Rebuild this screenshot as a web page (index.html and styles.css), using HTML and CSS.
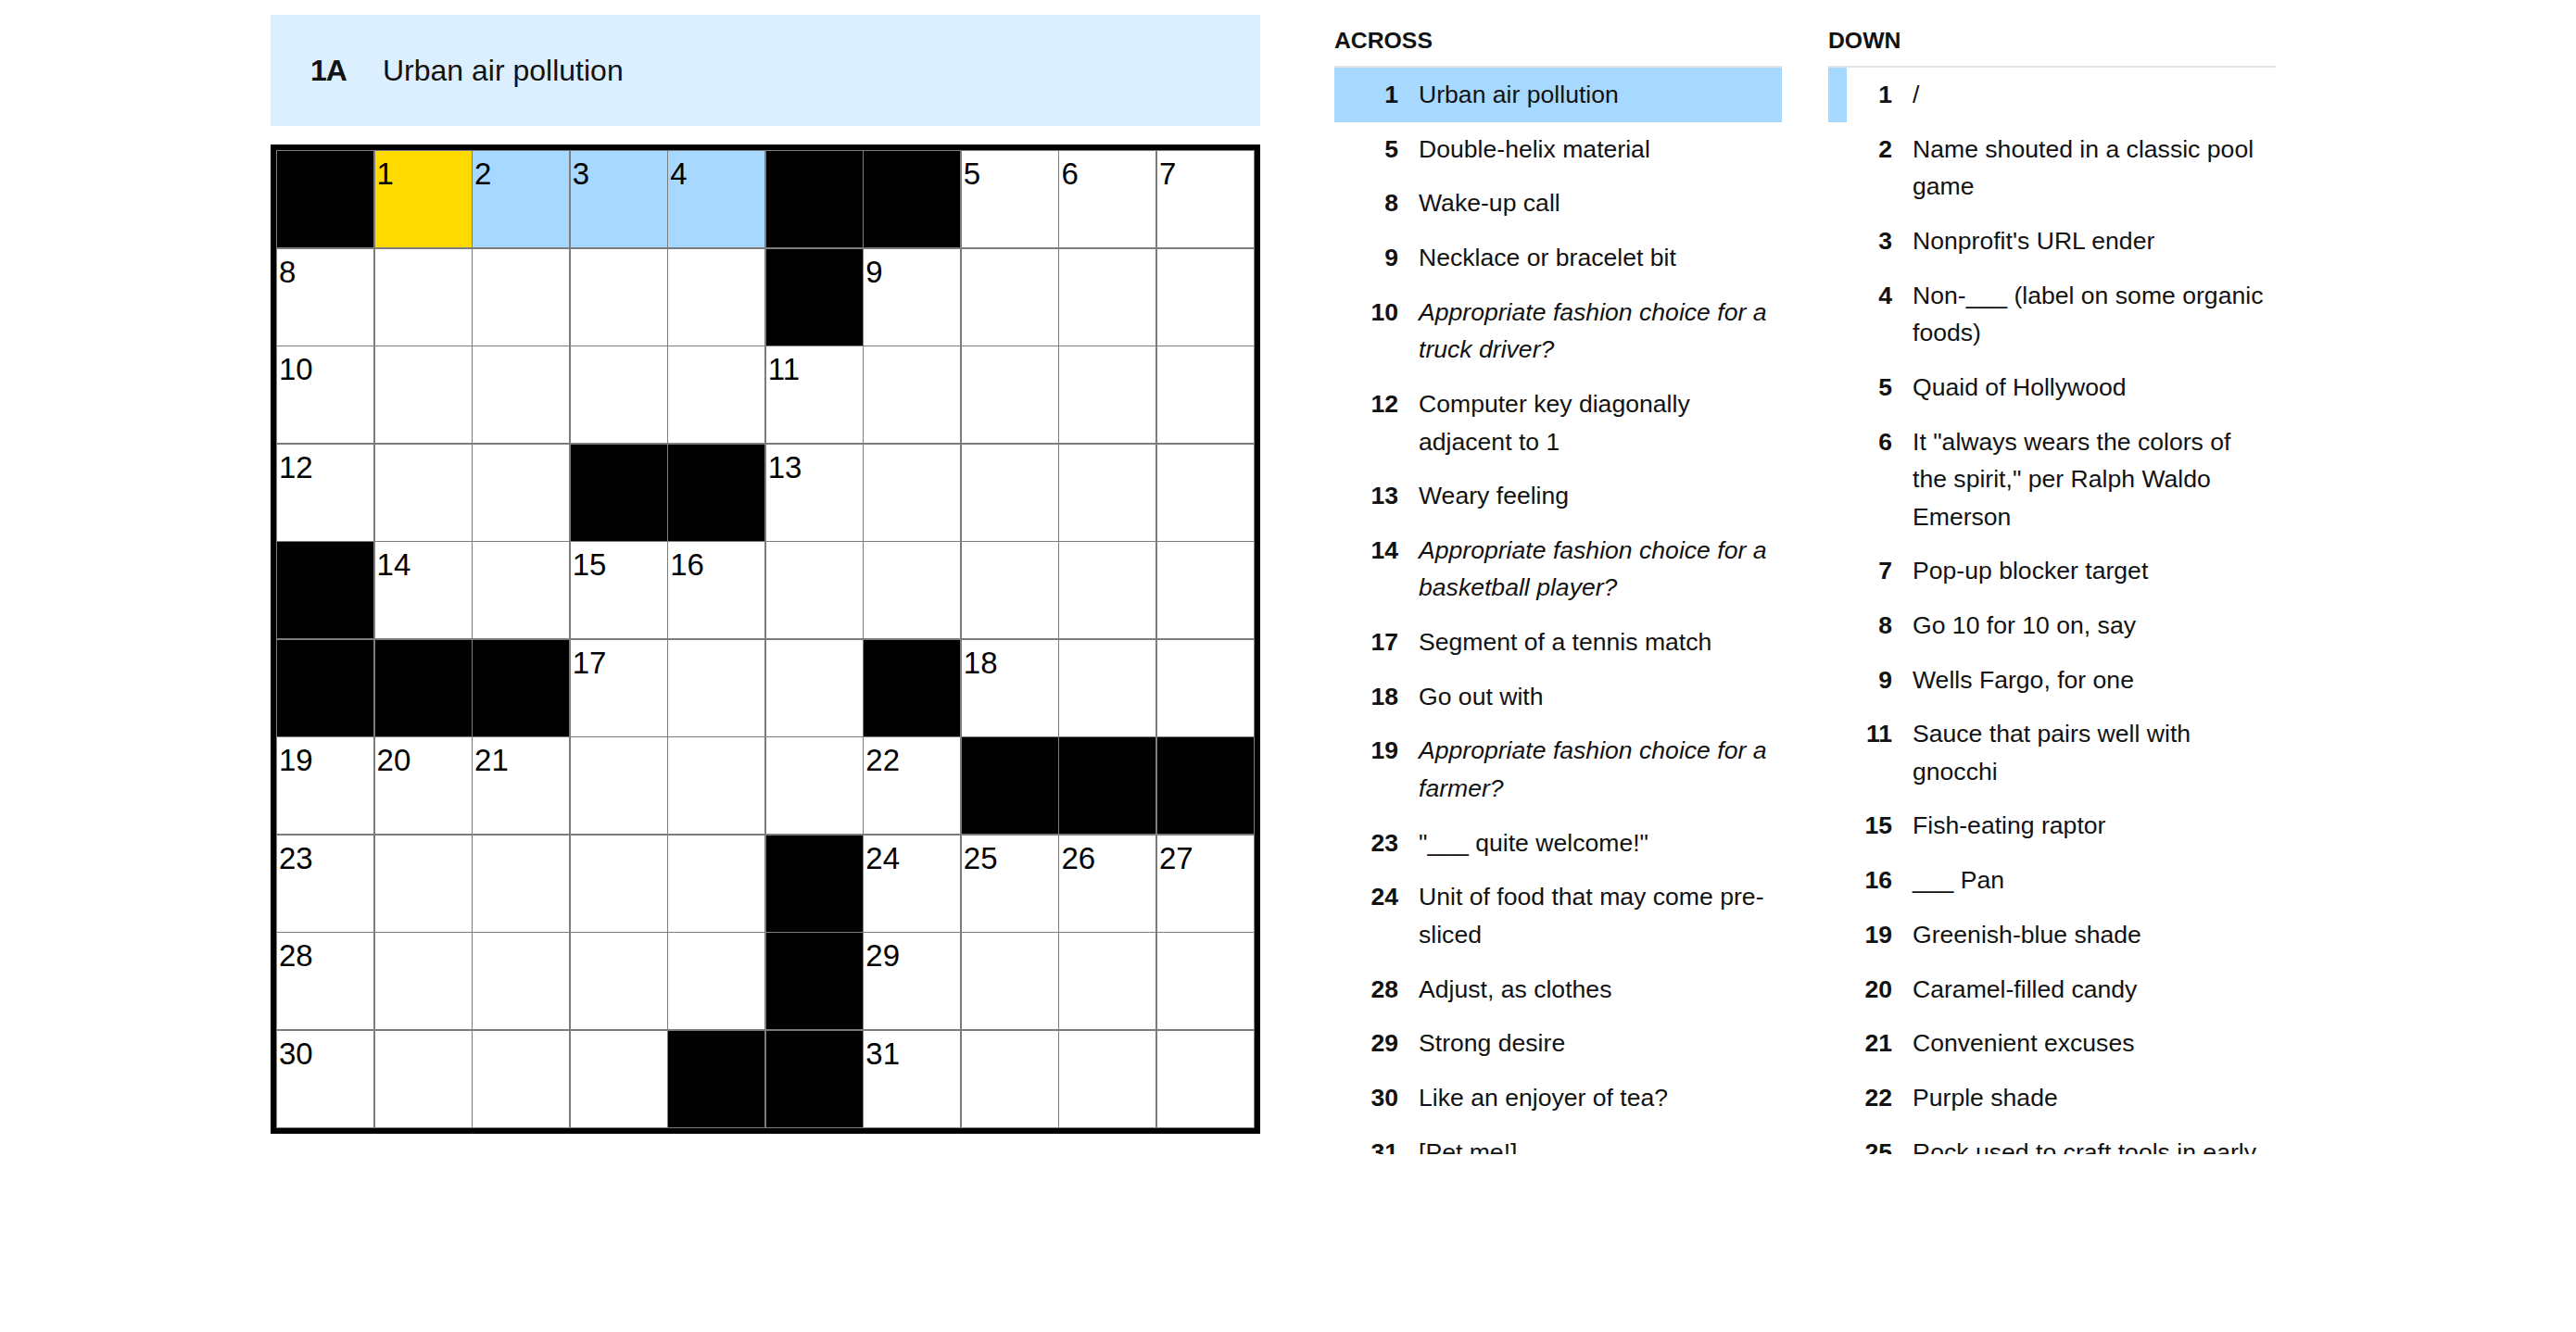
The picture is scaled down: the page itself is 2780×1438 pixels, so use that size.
FILE: index.html
```html
<!DOCTYPE html>
<html lang="en">
<head>
<meta charset="utf-8">
<title>Crossword</title>
<link rel="stylesheet" href="styles.css">
</head>
<body>
<main class="app">
  <section class="board">
    <div class="clue-bar">
      <span class="clue-bar-label">1A</span>
      <span class="clue-bar-text">Urban air pollution</span>
    </div>
    <div class="grid-frame">
      <div class="grid">
        <!-- row 1 -->
        <div class="cell block"></div>
        <div class="cell sel"><span class="num">1</span></div>
        <div class="cell word"><span class="num">2</span></div>
        <div class="cell word"><span class="num">3</span></div>
        <div class="cell word"><span class="num">4</span></div>
        <div class="cell block"></div>
        <div class="cell block"></div>
        <div class="cell"><span class="num">5</span></div>
        <div class="cell"><span class="num">6</span></div>
        <div class="cell"><span class="num">7</span></div>
        <!-- row 2 -->
        <div class="cell"><span class="num">8</span></div>
        <div class="cell"></div>
        <div class="cell"></div>
        <div class="cell"></div>
        <div class="cell"></div>
        <div class="cell block"></div>
        <div class="cell"><span class="num">9</span></div>
        <div class="cell"></div>
        <div class="cell"></div>
        <div class="cell"></div>
        <!-- row 3 -->
        <div class="cell"><span class="num">10</span></div>
        <div class="cell"></div>
        <div class="cell"></div>
        <div class="cell"></div>
        <div class="cell"></div>
        <div class="cell"><span class="num">11</span></div>
        <div class="cell"></div>
        <div class="cell"></div>
        <div class="cell"></div>
        <div class="cell"></div>
        <!-- row 4 -->
        <div class="cell"><span class="num">12</span></div>
        <div class="cell"></div>
        <div class="cell"></div>
        <div class="cell block"></div>
        <div class="cell block"></div>
        <div class="cell"><span class="num">13</span></div>
        <div class="cell"></div>
        <div class="cell"></div>
        <div class="cell"></div>
        <div class="cell"></div>
        <!-- row 5 -->
        <div class="cell block"></div>
        <div class="cell"><span class="num">14</span></div>
        <div class="cell"></div>
        <div class="cell"><span class="num">15</span></div>
        <div class="cell"><span class="num">16</span></div>
        <div class="cell"></div>
        <div class="cell"></div>
        <div class="cell"></div>
        <div class="cell"></div>
        <div class="cell"></div>
        <!-- row 6 -->
        <div class="cell block"></div>
        <div class="cell block"></div>
        <div class="cell block"></div>
        <div class="cell"><span class="num">17</span></div>
        <div class="cell"></div>
        <div class="cell"></div>
        <div class="cell block"></div>
        <div class="cell"><span class="num">18</span></div>
        <div class="cell"></div>
        <div class="cell"></div>
        <!-- row 7 -->
        <div class="cell"><span class="num">19</span></div>
        <div class="cell"><span class="num">20</span></div>
        <div class="cell"><span class="num">21</span></div>
        <div class="cell"></div>
        <div class="cell"></div>
        <div class="cell"></div>
        <div class="cell"><span class="num">22</span></div>
        <div class="cell block"></div>
        <div class="cell block"></div>
        <div class="cell block"></div>
        <!-- row 8 -->
        <div class="cell"><span class="num">23</span></div>
        <div class="cell"></div>
        <div class="cell"></div>
        <div class="cell"></div>
        <div class="cell"></div>
        <div class="cell block"></div>
        <div class="cell"><span class="num">24</span></div>
        <div class="cell"><span class="num">25</span></div>
        <div class="cell"><span class="num">26</span></div>
        <div class="cell"><span class="num">27</span></div>
        <!-- row 9 -->
        <div class="cell"><span class="num">28</span></div>
        <div class="cell"></div>
        <div class="cell"></div>
        <div class="cell"></div>
        <div class="cell"></div>
        <div class="cell block"></div>
        <div class="cell"><span class="num">29</span></div>
        <div class="cell"></div>
        <div class="cell"></div>
        <div class="cell"></div>
        <!-- row 10 -->
        <div class="cell"><span class="num">30</span></div>
        <div class="cell"></div>
        <div class="cell"></div>
        <div class="cell"></div>
        <div class="cell block"></div>
        <div class="cell block"></div>
        <div class="cell"><span class="num">31</span></div>
        <div class="cell"></div>
        <div class="cell"></div>
        <div class="cell"></div>
      </div>
    </div>
  </section>

  <section class="clue-lists">
    <div class="clue-col">
      <h3 class="clue-head">Across</h3>
      <ol class="clue-list">
        <li class="clue active"><span class="clue-num">1</span><span class="clue-text">Urban air pollution</span></li>
        <li class="clue"><span class="clue-num">5</span><span class="clue-text">Double-helix material</span></li>
        <li class="clue"><span class="clue-num">8</span><span class="clue-text">Wake-up call</span></li>
        <li class="clue"><span class="clue-num">9</span><span class="clue-text">Necklace or bracelet bit</span></li>
        <li class="clue"><span class="clue-num">10</span><span class="clue-text"><em>Appropriate fashion choice for a truck driver?</em></span></li>
        <li class="clue"><span class="clue-num">12</span><span class="clue-text">Computer key diagonally adjacent to 1</span></li>
        <li class="clue"><span class="clue-num">13</span><span class="clue-text">Weary feeling</span></li>
        <li class="clue"><span class="clue-num">14</span><span class="clue-text"><em>Appropriate fashion choice for a basketball player?</em></span></li>
        <li class="clue"><span class="clue-num">17</span><span class="clue-text">Segment of a tennis match</span></li>
        <li class="clue"><span class="clue-num">18</span><span class="clue-text">Go out with</span></li>
        <li class="clue"><span class="clue-num">19</span><span class="clue-text"><em>Appropriate fashion choice for a farmer?</em></span></li>
        <li class="clue"><span class="clue-num">23</span><span class="clue-text">"___ quite welcome!"</span></li>
        <li class="clue"><span class="clue-num">24</span><span class="clue-text">Unit of food that may come pre-sliced</span></li>
        <li class="clue"><span class="clue-num">28</span><span class="clue-text">Adjust, as clothes</span></li>
        <li class="clue"><span class="clue-num">29</span><span class="clue-text">Strong desire</span></li>
        <li class="clue"><span class="clue-num">30</span><span class="clue-text">Like an enjoyer of tea?</span></li>
        <li class="clue"><span class="clue-num">31</span><span class="clue-text">[Pet me!]</span></li>
      </ol>
    </div>
    <div class="clue-col">
      <h3 class="clue-head">Down</h3>
      <ol class="clue-list">
        <li class="clue cross"><span class="clue-num">1</span><span class="clue-text">/</span></li>
        <li class="clue"><span class="clue-num">2</span><span class="clue-text">Name shouted in a classic pool game</span></li>
        <li class="clue"><span class="clue-num">3</span><span class="clue-text">Nonprofit's URL ender</span></li>
        <li class="clue"><span class="clue-num">4</span><span class="clue-text">Non-___ (label on some organic foods)</span></li>
        <li class="clue"><span class="clue-num">5</span><span class="clue-text">Quaid of Hollywood</span></li>
        <li class="clue"><span class="clue-num">6</span><span class="clue-text">It "always wears the colors of the spirit," per Ralph Waldo Emerson</span></li>
        <li class="clue"><span class="clue-num">7</span><span class="clue-text">Pop-up blocker target</span></li>
        <li class="clue"><span class="clue-num">8</span><span class="clue-text">Go 10 for 10 on, say</span></li>
        <li class="clue"><span class="clue-num">9</span><span class="clue-text">Wells Fargo, for one</span></li>
        <li class="clue"><span class="clue-num">11</span><span class="clue-text">Sauce that pairs well with gnocchi</span></li>
        <li class="clue"><span class="clue-num">15</span><span class="clue-text">Fish-eating raptor</span></li>
        <li class="clue"><span class="clue-num">16</span><span class="clue-text">___ Pan</span></li>
        <li class="clue"><span class="clue-num">19</span><span class="clue-text">Greenish-blue shade</span></li>
        <li class="clue"><span class="clue-num">20</span><span class="clue-text">Caramel-filled candy</span></li>
        <li class="clue"><span class="clue-num">21</span><span class="clue-text">Convenient excuses</span></li>
        <li class="clue"><span class="clue-num">22</span><span class="clue-text">Purple shade</span></li>
        <li class="clue"><span class="clue-num">25</span><span class="clue-text">Rock used to craft tools in early times</span></li>
      </ol>
    </div>
  </section>
</main>
</body>
</html>
```

FILE: styles.css
```css
* {
  box-sizing: border-box;
}

html,
body {
  margin: 0;
  background: #fff;
}

body {
  font-family: "Liberation Sans", Arial, sans-serif;
  color: #121212;
}

.app {
  display: flex;
  align-items: flex-start;
  gap: 80px;
  padding: 16px 0 0 292px;
}

/* ---------- board: current clue + grid ---------- */

.board {
  width: 1068px;
  flex: none;
  display: flex;
  flex-direction: column;
  gap: 20px;
}

.clue-bar {
  height: 120px;
  background: #dcefff;
  display: flex;
  align-items: center;
  padding-left: 43px;
  font-size: 32px;
}

.clue-bar-label {
  width: 78px;
  flex: none;
  font-weight: 700;
  letter-spacing: -1px;
}

.grid-frame {
  width: 1068px;
  height: 1068px;
  border: 6px solid #000;
  background: #7c7c7c;
}

.grid {
  width: 100%;
  height: 100%;
  display: grid;
  grid-template-columns: repeat(10, 1fr);
  grid-template-rows: repeat(10, 1fr);
  gap: 1.5px;
  padding: 1px;
}

.cell {
  position: relative;
  background: #fff;
}

.cell.block {
  background: #000;
}

.cell.sel {
  background: #ffda00;
}

.cell.word {
  background: #a7d8ff;
}

.num {
  position: absolute;
  top: 8px;
  left: 2px;
  font-size: 33px;
  line-height: 1;
  color: #000;
}

/* ---------- clue lists ---------- */

.clue-lists {
  display: flex;
  gap: 50px;
}

.clue-col {
  width: 483px;
  flex: none;
}

.clue-head {
  margin: 0;
  height: 57px;
  line-height: 55px;
  font-size: 24.75px;
  font-weight: 700;
  text-transform: uppercase;
  border-bottom: 2px solid #e4e4e4;
}

.clue-list {
  list-style: none;
  margin: 0;
  padding: 0;
  height: 1173px;
  overflow: hidden;
}

.clue {
  display: flex;
  align-items: flex-start;
  border-left: 20px solid transparent;
  padding: 9.1px 11px 9.1px 0;
  font-size: 26.6px;
  line-height: 40.5px;
}

.clue.active {
  background: #a7d8ff;
  border-left-color: #a7d8ff;
}

.clue.cross {
  border-left-color: #a7d8ff;
}

.clue-num {
  width: 49px;
  flex: none;
  margin-right: 22px;
  text-align: right;
  font-weight: 700;
}

.clue-text {
  flex: 1;
  min-width: 0;
}

.clue-text em {
  font-style: italic;
}
```
